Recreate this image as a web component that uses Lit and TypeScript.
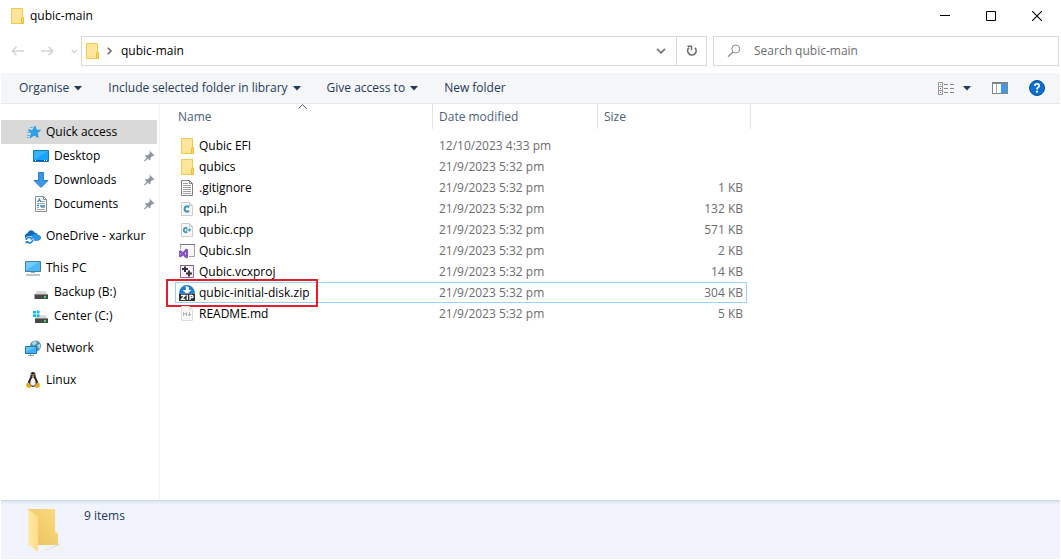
import { LitElement, html, css, svg, nothing, TemplateResult } from "lit";
import { customElement, state } from "lit/decorators.js";
import { classMap } from "lit/directives/class-map.js";

const shape = (w: number, h: number, body: unknown, crisp = false) => html`<svg
  width=${w} height=${h} viewBox="0 0 ${w} ${h}" fill="none" aria-hidden="true"
  shape-rendering=${crisp ? "crispEdges" : "auto"}>${body}</svg>`;

const folder = shape(16, 16, svg`
  <path d="M2.5 .5H13.5V9.5H14.5V15.5H2.5Z" fill="#ffe59a" stroke="#efc950"/>
  <path d="M12.5 15V10.5Q12.5 9.5 13.5 9.5H14.5V15.5H12.5Z" fill="#f7d878" stroke="#e8bd3a"/>`);

const icons: Record<string, TemplateResult> = {
  folder,
  text: shape(16, 16, svg`
    <path d="M2.5 .5H10.5L13.5 3.5V15.5H2.5Z" fill="#fff" stroke="#808080"/>
    <path d="M10.5 .5V3.5H13.5" stroke="#808080"/>
    <path d="M4 3.5H9M4 5.5H12M4 7.5H12M4 9.5H12M4 11.5H12M4 13.5H12" stroke="#a2a2a2"/>`),
  c: shape(16, 16, svg`
    <path d="M2.5 1.5H10.5L13.5 4.5V14.5H2.5Z" fill="#f7f7f7" stroke="#cdcdcd"/>
    <path d="M10.5 1.5V4.5H13.5" stroke="#c6c6c6"/>
    <path d="M10.3 6Q7.2 4.4 5.9 6.5Q5.2 8 6 9.7Q7.3 11.5 10.3 10.2" stroke="#3d91b3" stroke-width="2"/>`),
  cpp: shape(16, 16, svg`
    <path d="M2.5 1.5H10.5L13.5 4.5V14.5H2.5Z" fill="#f7f7f7" stroke="#cdcdcd"/>
    <path d="M10.5 1.5V4.5H13.5" stroke="#c6c6c6"/>
    <path d="M8.3 6.4Q5.9 5.2 5 7.1Q4.5 8.4 5.2 9.5Q6.3 10.9 8.3 9.8" stroke="#3d91b3" stroke-width="1.8"/>
    <path d="M7 8H12M10.5 6.5V9.6" stroke="#3d91b3" stroke-width="1.2"/>`),
  sln: shape(16, 16, svg`
    <path d="M1.5 6V1.5H15.5V13.5H10" fill="#f8f8f8" stroke="#a0a0a0"/>
    <path d="M1 1.5H16" stroke="#777"/>
    <path d="M0 8L1.5 7L4 9L7 5.5L9 6.5V14.5L7 15.5L4 12.5L1.5 14.5L0 13.5Z" fill="#8754bc"/>
    <path d="M1.3 9.8V11.8L2.4 10.8ZM7 9.3V12L5.5 10.6Z" fill="#dac8ec"/>`),
  vcx: shape(16, 16, svg`
    <path d="M1.5 1.5H14.5V13.5H1.5Z" fill="#f5f1f7" stroke="#9165a5"/>
    <path d="M1 1.5H15" stroke="#80678c"/>
    <path d="M3 5H9M6 2.5V8M7 9.5H13M10 6.5V12.5" stroke="#363238" stroke-width="2"/>`),
  zip: shape(16, 16, svg`
    <path d="M0 8.5A8 8.5 0 0 1 16 8.5Z" fill="#1480d8"/>
    <path d="M6.5 1L10 2V5H12.5L8 9L3.5 5H7Z" fill="#fff"/>
    <path d="M0 8.5H16V16H0Z" fill="#2e3135"/>
    <path d="M2 10.5H6L2.6 14.3H6.3M8.3 9.8V15M11 15V10.5H13Q14 10.5 14 11.5Q14 12.7 13 12.7H11" stroke="#fff" stroke-width="1.3"/>`),
  md: shape(16, 16, svg`
    <path d="M2.5 .5H10.5L13.5 3.5V14.5H2.5Z" fill="#f9f9f9" stroke="#dedede"/>
    <path d="M10.5 .5V3.5H13.5" stroke="#dedede"/>
    <path d="M4.5 10V6.5L6 8.5L7.5 6.5V10M10.5 6V9.5M9 8L10.5 10L12 8" stroke="#b2b2b2"/>`),
  star: shape(16, 16, svg`
    <path d="M10 2L11.3 6L15.6 6.3L12.2 9L13.3 13.5L9.1 11.2L5 14L6.4 9.2L3.5 6.5L7.7 6.2Z" fill="#2aa3ec" stroke="#1684cd" stroke-width=".6"/>
    <path d="M5 3.5H8M3 5.5H5M2 8.5H5M2 11.5H5M2 13.5H4" stroke="#5bb3e8"/>`),
  desktop: shape(16, 16, svg`
    <path d="M.5 2.5H15.5V13.5H.5Z" fill="#18a4fb" stroke="#1377bd"/>
    <path d="M1 3H15L1 12Z" fill="#35b3ff"/>
    <path d="M1 12.5H15" stroke="#105c93"/><path d="M2 12.5H3M11 12.5H12M13 12.5H14" stroke="#fff"/>`),
  down: shape(16, 16, svg`<path d="M5.5 .5H10.5V8.5H15L8 15.5L1 8.5H5.5Z" fill="#3c98e6" stroke="#2b7dc9"/>`),
  doc: shape(16, 16, svg`
    <path d="M2.5 .5H10.5L13.5 3.5V15.5H2.5Z" fill="#fff" stroke="#8d8d8d"/>
    <path d="M10.5 .5V3.5H13.5" stroke="#8d8d8d"/>
    <path d="M4.5 6L6.5 2.5L7.5 6M5 4.8H7.5" stroke="#2b7cc0"/>
    <path d="M8 5.5H12M4 7.5H12M4 11.5H6M4 13.5H12M8 11.5H12" stroke="#9aa8b5"/>
    <path d="M7 10H12M4 9.5H6" stroke="#2982c9" stroke-width="1.5"/>`),
  onedrive: shape(16, 16, svg`
    <path d="M0 9Q-.5 6 2.5 5Q4 1.8 7 2.5Q9 3 9.8 4.8Q12.3 4.8 13 7Q16 7.5 15.8 10.2Q15.3 12.5 12 12.5H4Q1 12.5 0 9Z" fill="#1269bd"/>
    <path d="M6 8.5L9 6Q12 5 13 7.2Q16 7.5 15.8 10.2Q15 12.5 12 12.5H6Z" fill="#2795e3"/>
    <circle cx="4.5" cy="12" r="4" fill="#fff"/>
    <path d="M1.2 12Q1.5 9.3 4.3 9.2L6.6 10.2M7.6 12.2Q7 15.1 4.2 15L2 14" stroke="#1680d8" stroke-width="1.5"/>
    <path d="M7.8 8.5V11.5H4.8ZM.7 16V13H3.7Z" fill="#1680d8"/>`),
  pc: shape(16, 16, svg`
    <path d="M.5 1.5H15.5V11.5H.5Z" fill="#4eb8f4" stroke="#457f9f"/>
    <path d="M1 2H14L1 10Z" fill="#75ccfa"/>
    <path d="M6 12.5H10" stroke="#9aaab3"/><path d="M1 15H15" stroke="#7992a0"/>`),
  drive: shape(16, 16, svg`
    <path d="M4 7H12L15 11H1.5Z" fill="#d6d8da"/><path d="M1.5 10.5H15V15H1.5Z" fill="#46494b"/>
    <path d="M1.5 10.5H15" stroke="#888"/><path d="M11 12H13V14H11Z" fill="#35e35a"/>`),
  windrive: shape(16, 16, svg`
    <path d="M4 7H12L15 11H2Z" fill="#d6d8da"/><path d="M2 10.5H15V15H2Z" fill="#46494b"/>
    <path d="M2 10.5H15" stroke="#888"/><path d="M11 12H13V14H11Z" fill="#35e35a"/>
    <path d="M0 3H3V5.500H0ZM3.700 2.500H6.500V5.500H3.700ZM0 6.200H3V9H0ZM3.700 6.200H6.500V9H3.700Z" fill="#16bdf2"/>`),
  network: shape(16, 16, svg`
    <circle cx="10.5" cy="6" r="5.5" fill="#4f8fad"/>
    <path d="M7 3Q8 1 10.5 1L12 3L10 5L8 5.5ZM12 5L15 4Q16 7 14 9Z" fill="#b5d9e4"/>
    <path d="M.5 6.5H11.5V13.5H.5Z" fill="#3fb0f5" stroke="#2776a8"/>
    <path d="M1 7H11L1 12Z" fill="#65c6fb"/><path d="M3 15.5H9M5.5 14V15" stroke="#8aa3b2"/>`),
  linux: shape(16, 16, svg`
    <path d="M8 0Q5.5 0 5.5 3.2Q5.5 5 4 7.5Q2 11 3.5 13L8 15L12.5 13Q14 11 12 7.5Q10.5 5 10.5 3.2Q10.5 0 8 0Z" fill="#242424"/>
    <path d="M8 5Q6.5 6 5.7 8.5Q4.7 11.5 5.8 13Q8 14.5 10.2 13Q11.3 11.5 10.3 8.5Q9.5 6 8 5Z" fill="#f2f2f2"/>
    <path d="M6.5 4L8 3.2L9.5 4L8 5.5ZM1.3 11.5L4 10.5L6.5 14.5L5 16L1.3 15ZM14.7 11.5L12 10.5L9.5 14.5L11 16L14.7 15Z" fill="#e9a51c"/>
    <path d="M6.5 2.5H7.3M8.7 2.5H9.5" stroke="#fff"/>`),
  pin: shape(12, 12, svg`
    <path d="M7 1L11.5 5.5L10.3 6.3L9.3 6L7.5 8V9.500L6.7 10.5L2 6L2.7 5.2L4.7 5.2L6.8 3.3L6.5 2Z" fill="#8b98a3"/>
    <path d="M5 7.5L1.5 11" stroke="#8b98a3" stroke-width="1.2"/>`),
};

const caret = shape(8, 5, svg`<path d="M0 0H8L4 4.5Z" fill="#1e395b"/>`);

interface Place { icon: string; label: string; child?: boolean; pinned?: boolean }
interface Entry { icon: string; name: string; date: string; size: string }

const groups: Place[][] = [
  [
    { icon: "star", label: "Quick access" },
    { icon: "desktop", label: "Desktop", child: true, pinned: true },
    { icon: "down", label: "Downloads", child: true, pinned: true },
    { icon: "doc", label: "Documents", child: true, pinned: true },
  ],
  [{ icon: "onedrive", label: "OneDrive - xarkur" }],
  [
    { icon: "pc", label: "This PC" },
    { icon: "drive", label: "Backup (B:)", child: true },
    { icon: "windrive", label: "Center (C:)", child: true },
  ],
  [{ icon: "network", label: "Network" }],
  [{ icon: "linux", label: "Linux" }],
];

const day = "21/9/2023 5:32 pm";
const entries: Entry[] = [
  { icon: "folder", name: "Qubic EFI", date: "12/10/2023 4:33 pm", size: "" },
  { icon: "folder", name: "qubics", date: day, size: "" },
  { icon: "text", name: ".gitignore", date: day, size: "1 KB" },
  { icon: "c", name: "qpi.h", date: day, size: "132 KB" },
  { icon: "cpp", name: "qubic.cpp", date: day, size: "571 KB" },
  { icon: "sln", name: "Qubic.sln", date: day, size: "2 KB" },
  { icon: "vcx", name: "Qubic.vcxproj", date: day, size: "14 KB" },
  { icon: "zip", name: "qubic-initial-disk.zip", date: day, size: "304 KB" },
  { icon: "md", name: "README.md", date: day, size: "5 KB" },
];

const reset = css`
  * { box-sizing: border-box; }
  svg { display: block; flex: none; }
  button, input { font: inherit; color: inherit; border: 0; padding: 0; margin: 0; background: none; }
`;

@customElement("nav-pane")
class NavPane extends LitElement {
  @state() private current = "Quick access";

  static styles = [reset, css`
    :host { display: block; padding-top: 16px; border-right: 1px solid #f2f2f2; color: #000; }
    .group { list-style: none; margin: 0 2px 8px 0; padding: 0; }
    .place { display: flex; align-items: center; gap: 5px; height: 24px; padding: 0 2px 0 24px;
      color: inherit; text-decoration: none; white-space: nowrap; }
    .child { padding-left: 32px; }
    .current { background: #d9d9d9; }
    .label { flex: 1; }
  `];

  render() {
    return groups.map((g) => html`<ul class="group">${g.map((p) => html`<li>
      <a href="#" class=${classMap({ place: true, child: !!p.child, current: p.label === this.current })}
        @click=${(e: Event) => { e.preventDefault(); this.current = p.label; }}>
        ${icons[p.icon]}<span class="label">${p.label}</span>${p.pinned ? icons.pin : nothing}
      </a></li>`)}</ul>`);
  }
}

@customElement("file-list")
class FileList extends LitElement {
  @state() private selected = "qubic-initial-disk.zip";

  static styles = [reset, css`
    :host { display: block; padding-left: 15px; overflow: hidden; }
    .files { table-layout: fixed; width: 576px; border-collapse: separate; border-spacing: 0; color: #6d6d6d; }
    .c-name { width: 258px; }
    .c-date { width: 165px; }
    .c-size { width: 149px; }
    .head { position: relative; height: 25px; padding: 0; font-weight: 400; text-align: left; color: #4c607a;
      border-right: 1px solid #e5e5e5; }
    .sort { display: block; width: 100%; height: 25px; padding-left: 6px; text-align: left; }
    .first .sort { padding-left: 3px; }
    .arrow { position: absolute; left: 123px; top: 0; }
    .gap td { height: 6px; padding: 0; }
    .cell { height: 21px; padding: 0 6px; white-space: nowrap; line-height: 16px; }
    .name { position: relative; padding-left: 4px; color: #000; }
    .file { display: flex; align-items: center; gap: 4px; }
    .size { text-align: right; padding-right: 4px; }
    .on .cell { box-shadow: inset 0 1px #99d1ff, inset 0 -1px #99d1ff; }
    .on .name { box-shadow: inset 1px 1px #99d1ff, inset 0 -1px #99d1ff; }
    .on .size { box-shadow: inset -1px 1px #99d1ff, inset 0 -1px #99d1ff; }
    .callout { position: absolute; left: -9px; top: -3px; width: 152px; height: 28px;
      border: 2px solid #e01f2b; pointer-events: none; }
  `];

  render() {
    return html`<table class="files">
      <colgroup><col class="c-name"><col class="c-date"><col class="c-size"><col></colgroup>
      <thead><tr>
        <th class="head first"><button class="sort">Name</button>
          <span class="arrow">${shape(9, 5, svg`<path d="M.5 4.5L4.5 .7L8.5 4.5" stroke="#555"/>`)}</span></th>
        <th class="head"><button class="sort">Date modified</button></th>
        <th class="head" colspan="2"><button class="sort">Size</button></th>
      </tr></thead>
      <tbody>
        <tr class="gap"><td colspan="4"></td></tr>
        ${entries.map((f) => html`<tr class=${classMap({ on: f.name === this.selected })}
          @click=${() => { this.selected = f.name; }}>
          <td class="cell name"><span class="file">${icons[f.icon]}<span>${f.name}</span></span>
            ${f.name.endsWith(".zip") ? html`<span class="callout"></span>` : nothing}</td>
          <td class="cell">${f.date}</td>
          <td class="cell size">${f.size}</td>
        </tr>`)}
      </tbody>
    </table>`;
  }
}

@customElement("app-root")
class AppRoot extends LitElement {
  static styles = [reset, css`
    :host { display: flex; flex-direction: column; height: 100vh; padding: 0 1px 1px; background: #fff;
      font: 12px/16px "Open Sans", "Noto Sans", sans-serif; color: #000; box-sizing: border-box; }
    .titlebar { display: flex; align-items: center; height: 32px; padding-left: 8px; }
    .title { flex: 1; margin: 0 0 0 5px; font: inherit; }
    .win { display: grid; place-items: center; width: 46px; height: 32px; }
    .addressrow { display: flex; align-items: center; padding: 4px 1px 7px 10px; }
    .history { display: flex; align-items: center; width: 70px; gap: 17px; }
    .address { flex: 1; display: flex; align-items: stretch; height: 30px; border: 1px solid #d9d9d9; }
    .crumbs { flex: 1; display: flex; align-items: center; padding-left: 2px; }
    .sep { margin: 0 9px 0 7px; }
    .drop { display: grid; place-items: center; width: 30px; }
    .reload { border-left: 1px solid #d9d9d9; }
    .search { display: flex; align-items: center; gap: 13px; width: 346px; height: 30px; margin-left: 6px;
      padding: 0 13px; border: 1px solid #d9d9d9; }
    .field { flex: 1; min-width: 0; outline: none; }
    .field::placeholder { color: #6d6d6d; opacity: 1; }
    .toolbar { display: flex; align-items: center; height: 31px; padding: 0 15px 0 18px; background: #f5f6f7;
      border-bottom: 1px solid #e8e9eb; color: #1e395b; }
    .cmd { display: flex; align-items: center; gap: 5px; margin-right: 26px; white-space: nowrap; }
    .tools { display: flex; align-items: center; margin-left: auto; gap: 21px; }
    .view { display: flex; align-items: center; gap: 9px; }
    .main { flex: 1; min-height: 0; display: flex; }
    .nav { flex: none; width: 159px; }
    .list { flex: 1; min-width: 0; }
    .status { display: flex; gap: 24px; height: 59px; padding: 8px 24px 0; color: #1e395b;
      background: linear-gradient(#c5d6e8, #e3ebf5 2px, #f1f4fc 5px); }
  `];

  render() {
    return html`
      <header class="titlebar">
        ${folder}<h1 class="title">qubic-main</h1>
        <button class="win" aria-label="Minimise">${shape(10, 10, svg`<path d="M0 4.5H10" stroke="#000"/>`)}</button>
        <button class="win" aria-label="Maximise">${shape(10, 10, svg`<path d="M.5 .5H9.5V9.5H.5Z" stroke="#000"/>`)}</button>
        <button class="win" aria-label="Close">${shape(10, 10, svg`<path d="M0 0L10 10M10 0L0 10" stroke="#000" stroke-width="1.1"/>`)}</button>
      </header>
      <div class="addressrow">
        <div class="history">
          <button aria-label="Back">${shape(13, 10, svg`<path d="M13 5H1.5M5.5 .8L1.3 5L5.5 9.2" stroke="#d4d4d4" stroke-width="1.6"/>`)}</button>
          <button aria-label="Forward">${shape(13, 10, svg`<path d="M0 5H11.5M7.5 .8L11.7 5L7.5 9.2" stroke="#d4d4d4" stroke-width="1.6"/>`)}</button>
          <button aria-label="Recent locations">${shape(7, 5, svg`<path d="M.7 .7L3.5 3.5L6.3 .7" stroke="#d4d4d4" stroke-width="1.4"/>`)}</button>
        </div>
        <div class="address">
          <div class="crumbs">${folder}
            <span class="sep">${shape(5, 8, svg`<path d="M.8 .8L4 4L.8 7.2" stroke="#666" stroke-width="1.5"/>`)}</span>
            <button>qubic-main</button></div>
          <button class="drop" aria-label="Previous locations">${shape(10, 6, svg`<path d="M1 .8L5 4.8L9 .8" stroke="#777" stroke-width="1.8"/>`)}</button>
          <button class="drop reload" aria-label="Refresh">${shape(12, 12, svg`
            <path d="M3 2.7A4.2 4.2 0 1 0 9 2.9" stroke="#707070" stroke-width="1.7"/>
            <path d="M1.5 1.2H5.5V5.2" stroke="#707070" stroke-width="1.5"/>`)}</button>
        </div>
        <label class="search">
          ${shape(14, 14, svg`<circle cx="8.8" cy="5" r="4" stroke="#8b8b8b"/><path d="M6 8L1 12.8" stroke="#8b8b8b" stroke-width="1.2"/>`)}
          <input class="field" type="text" aria-label="Search qubic-main" placeholder="Search qubic-main">
        </label>
      </div>
      <div class="toolbar">
        <button class="cmd">Organise ${caret}</button>
        <button class="cmd">Include selected folder in library ${caret}</button>
        <button class="cmd">Give access to ${caret}</button>
        <button class="cmd">New folder</button>
        <div class="tools">
          <button class="view" aria-label="Change your view">${shape(16, 13, svg`
            <path d="M.5 .5H4.5V12.5H.5ZM.5 4.5H4.5M.5 8.5H4.5" stroke="#999" fill="#fff"/>
            <path d="M6 2.5H10M12 2.5H16M6 6.5H10M12 6.5H16M6 10.5H10M12 10.5H16" stroke="#888"/>
            <path d="M2 2.5H3M2 6.5H3" stroke="#3678b8"/><path d="M2 10.5H3" stroke="#c33"/>`, true)}${caret}</button>
          <button aria-label="Preview pane">${shape(16, 12, svg`
            <path d="M.5 .5H15.5V11.5H.5Z" fill="#fff" stroke="#7d858c"/><path d="M0 1H16" stroke="#7d858c" stroke-width="2"/>
            <path d="M4.5 2V11" stroke="#aaa"/><path d="M9 2H15V11H9Z" fill="#3d9be6"/>`, true)}</button>
          <button aria-label="Help">${shape(16, 16, svg`
            <circle cx="8" cy="8" r="7.5" fill="#0c6fd0" stroke="#08509a"/>
            <path d="M5.8 6Q5.8 3.9 8 3.9Q10.2 3.9 10.2 5.8Q10.2 6.9 9 7.6Q8 8.2 8 9.4" stroke="#fff" stroke-width="1.7"/>
            <path d="M7 10.7H9V12.6H7Z" fill="#fff"/>`)}</button>
        </div>
      </div>
      <div class="main">
        <nav-pane class="nav"></nav-pane>
        <file-list class="list"></file-list>
      </div>
      <footer class="status">
        ${shape(35, 48, svg`
          <defs>
            <linearGradient id="back" x1="0" x2="1" y1="1" y2="0"><stop stop-color="#e9c05c"/><stop offset="1" stop-color="#fbdc80"/></linearGradient>
            <linearGradient id="front"><stop stop-color="#ffeaa8"/><stop offset="1" stop-color="#fbdd8a"/></linearGradient>
          </defs>
          <path d="M27 39L35 35V37L14 45Z" fill="#d9dde6"/>
          <path d="M3 1H30V23L33 26V37H3Z" fill="url(#back)"/>
          <path d="M3 1.5L13 8.5V44L3 36Z" fill="url(#front)"/>`)}
        <span>9 items</span>
      </footer>`;
  }
}
